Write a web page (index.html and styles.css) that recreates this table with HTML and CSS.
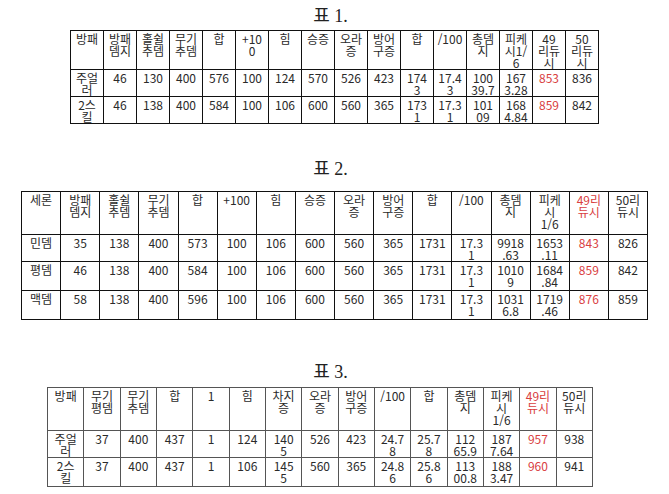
FILE: index.html
```html
<!DOCTYPE html>
<html lang="ko">
<head>
<meta charset="utf-8">
<title>표</title>
<link rel="stylesheet" href="styles.css">
</head>
<body>
<div class="page">
  <div class="title title-1">표 1.</div>
  <table class="grid grid-1">
    <tr class="head">
      <td>방패</td><td>방패<br>뎀지</td><td>홀쉴<br>추뎀</td><td>무기<br>추뎀</td><td>합</td><td>+10<br>0</td><td>힘</td><td>승증</td><td>오라<br>증</td><td>방어<br>구증</td><td>합</td><td>/100</td><td>총뎀<br>지</td><td>피케<br>시1/<br>6</td><td>49<br>리듀<br>시</td><td>50<br>리듀<br>시</td>
    </tr>
    <tr class="r27">
      <td>주얼<br>러</td><td>46</td><td>130</td><td>400</td><td>576</td><td>100</td><td>124</td><td>570</td><td>526</td><td>423</td><td>174<br>3</td><td>17.4<br>3</td><td>100<br>39.7</td><td>167<br>3.28</td><td class="red">853</td><td>836</td>
    </tr>
    <tr class="r26">
      <td>2스<br>킬</td><td>46</td><td>138</td><td>400</td><td>584</td><td>100</td><td>106</td><td>600</td><td>560</td><td>365</td><td>173<br>1</td><td>17.3<br>1</td><td>101<br>09</td><td>168<br>4.84</td><td class="red">859</td><td>842</td>
    </tr>
  </table>

  <div class="title title-2">표 2.</div>
  <table class="grid grid-2">
    <tr class="head">
      <td>세론</td><td>방패<br>뎀지</td><td>홀쉴<br>추뎀</td><td>무기<br>추뎀</td><td>합</td><td>+100</td><td>힘</td><td>승증</td><td>오라<br>증</td><td>방어<br>구증</td><td>합</td><td>/100</td><td>총뎀<br>지</td><td>피케<br>시<br>1/6</td><td class="red">49리<br>듀시</td><td>50리<br>듀시</td>
    </tr>
    <tr class="r27">
      <td>민뎀</td><td>35</td><td>138</td><td>400</td><td>573</td><td>100</td><td>106</td><td>600</td><td>560</td><td>365</td><td>1731</td><td>17.3<br>1</td><td>9918<br>.63</td><td>1653<br>.11</td><td class="red">843</td><td>826</td>
    </tr>
    <tr class="r29">
      <td>평뎀</td><td>46</td><td>138</td><td>400</td><td>584</td><td>100</td><td>106</td><td>600</td><td>560</td><td>365</td><td>1731</td><td>17.3<br>1</td><td>1010<br>9</td><td>1684<br>.84</td><td class="red">859</td><td>842</td>
    </tr>
    <tr class="r29">
      <td>맥뎀</td><td>58</td><td>138</td><td>400</td><td>596</td><td>100</td><td>106</td><td>600</td><td>560</td><td>365</td><td>1731</td><td>17.3<br>1</td><td>1031<br>6.8</td><td>1719<br>.46</td><td class="red">876</td><td>859</td>
    </tr>
  </table>

  <div class="title title-3">표 3.</div>
  <table class="grid grid-3">
    <tr class="head">
      <td>방패</td><td>무기<br>평뎀</td><td>무기<br>추뎀</td><td>합</td><td>1</td><td>힘</td><td>차지<br>증</td><td>오라<br>증</td><td>방어<br>구증</td><td>/100</td><td>합</td><td>총뎀<br>지</td><td>피케<br>시<br>1/6</td><td class="red">49리<br>듀시</td><td>50리<br>듀시</td>
    </tr>
    <tr class="r27">
      <td>주얼<br>러</td><td>37</td><td>400</td><td>437</td><td>1</td><td>124</td><td>140<br>5</td><td>526</td><td>423</td><td>24.7<br>8</td><td>25.7<br>8</td><td>112<br>65.9</td><td>187<br>7.64</td><td class="red">957</td><td>938</td>
    </tr>
    <tr class="r29">
      <td>2스<br>킬</td><td>37</td><td>400</td><td>437</td><td>1</td><td>106</td><td>145<br>5</td><td>560</td><td>365</td><td>24.8<br>6</td><td>25.8<br>6</td><td>113<br>00.8</td><td>188<br>3.47</td><td class="red">960</td><td>941</td>
    </tr>
  </table>
</div>
</body>
</html>
```
FILE: styles.css
```css
html, body {
  margin: 0;
  padding: 0;
  background: #ffffff;
}

.page {
  width: 669px;
  height: 494px;
  overflow: hidden;
}

.title {
  font-family: "Liberation Serif", "Noto Sans CJK KR", serif;
  font-size: 18px;
  line-height: 20px;
  height: 20px;
  color: #222;
  text-align: center;
  padding-right: 8px;
}

.title-1 { margin-top: 6px; }
.title-2 { margin-top: 35px; }
.title-3 { margin-top: 42px; }

.grid {
  border-collapse: collapse;
  table-layout: fixed;
  font-family: "Noto Sans CJK KR", "Noto Sans", sans-serif;
  font-size: 12px;
  line-height: 12px;
  color: #2a2a2a;
}

.grid td {
  border: 1px solid #111;
  padding: 2px 2px 0;
  text-align: center;
  vertical-align: top;
  white-space: nowrap;
  overflow: hidden;
}

.grid-1 {
  width: 529px;
  margin: 4px 0 0 70px;
}

.grid-2 {
  width: 627px;
  margin: 12px 0 0 21px;
}

.grid-3 {
  width: 546px;
  margin: 5px 0 0 47px;
}

.grid-3 td {
  border-color: #555;
}

.grid-1 .head { height: 38px; }
.grid-2 .head, .grid-3 .head { height: 43px; }
.r26 { height: 26px; }
.r27 { height: 27px; }
.r29 { height: 29px; }

.grid .red {
  color: #d9403f;
}
```
